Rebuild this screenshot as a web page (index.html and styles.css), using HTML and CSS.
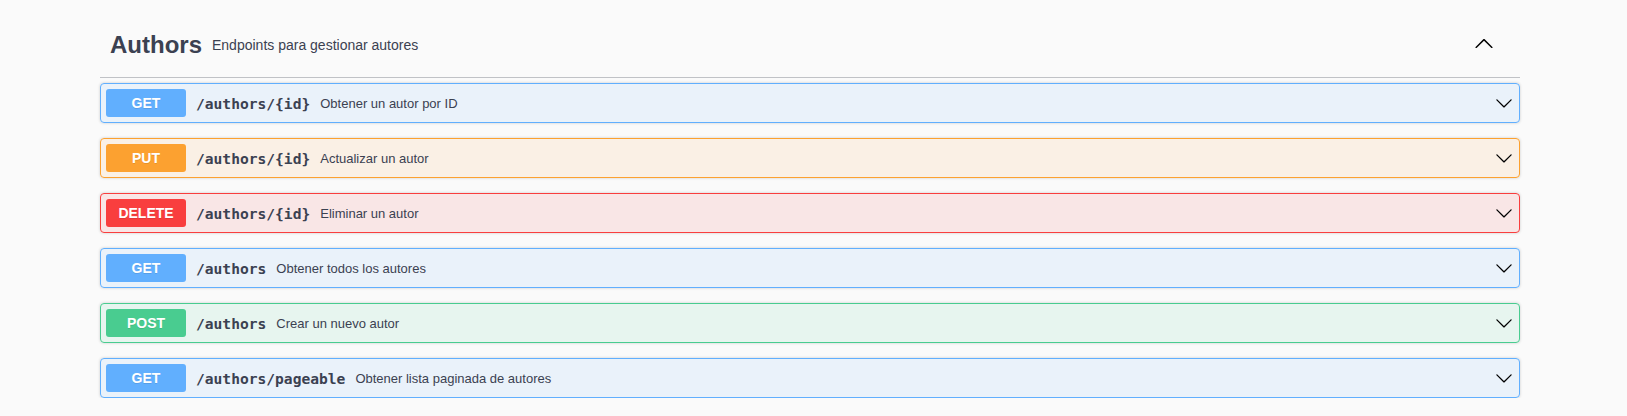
FILE: index.html
```html
<!DOCTYPE html>
<html lang="es">
<head>
<meta charset="utf-8">
<title>Authors</title>
<link rel="stylesheet" href="styles.css">
</head>
<body>
<svg class="defs" width="0" height="0" aria-hidden="true">
  <symbol viewBox="0 0 20 20" id="large-arrow-down">
    <path d="M17.418 6.109c.272-.268.709-.268.979 0s.271.701 0 .969l-7.908 7.83c-.27.268-.707.268-.979 0l-7.908-7.83c-.27-.268-.27-.701 0-.969.271-.268.709-.268.979 0L10 13.25l7.418-7.141z"/>
  </symbol>
</svg>
<div class="wrapper">
  <section class="tag-section">
    <div class="tag-header">
      <h3 class="tag-title">Authors</h3>
      <small class="tag-desc">Endpoints para gestionar autores</small>
      <button class="expand" aria-label="Collapse">
        <svg class="arrow arrow-up" width="20" height="20"><use href="#large-arrow-down"/></svg>
      </button>
    </div>
    <div class="ops">
      <div class="opblock get">
        <span class="method">GET</span>
        <span class="path">/authors/{id}</span>
        <span class="desc">Obtener un autor por ID</span>
        <svg class="arrow arrow-row" width="18" height="18"><use href="#large-arrow-down"/></svg>
      </div>
      <div class="opblock put">
        <span class="method">PUT</span>
        <span class="path">/authors/{id}</span>
        <span class="desc">Actualizar un autor</span>
        <svg class="arrow arrow-row" width="18" height="18"><use href="#large-arrow-down"/></svg>
      </div>
      <div class="opblock delete">
        <span class="method">DELETE</span>
        <span class="path">/authors/{id}</span>
        <span class="desc">Eliminar un autor</span>
        <svg class="arrow arrow-row" width="18" height="18"><use href="#large-arrow-down"/></svg>
      </div>
      <div class="opblock get">
        <span class="method">GET</span>
        <span class="path">/authors</span>
        <span class="desc">Obtener todos los autores</span>
        <svg class="arrow arrow-row" width="18" height="18"><use href="#large-arrow-down"/></svg>
      </div>
      <div class="opblock post">
        <span class="method">POST</span>
        <span class="path">/authors</span>
        <span class="desc">Crear un nuevo autor</span>
        <svg class="arrow arrow-row" width="18" height="18"><use href="#large-arrow-down"/></svg>
      </div>
      <div class="opblock get">
        <span class="method">GET</span>
        <span class="path">/authors/pageable</span>
        <span class="desc">Obtener lista paginada de autores</span>
        <svg class="arrow arrow-row" width="18" height="18"><use href="#large-arrow-down"/></svg>
      </div>
    </div>
  </section>
</div>
</body>
</html>
```
FILE: styles.css
```css
html, body {
  margin: 0;
  padding: 0;
  background: #fafafa;
}
body {
  font-family: "Liberation Sans", Arial, sans-serif;
  color: #3b4151;
}
.defs {
  position: absolute;
  width: 0;
  height: 0;
  overflow: hidden;
}
.wrapper {
  width: 1420px;
  margin-left: 100px;
  padding-top: 21px;
}
.tag-header {
  display: flex;
  align-items: center;
  padding: 10px 20px 18px 10px;
  border-bottom: 1px solid rgba(59, 65, 81, 0.3);
  margin-bottom: 5px;
}
.tag-title {
  margin: 0;
  font-size: 24px;
  line-height: 28px;
  font-weight: 700;
  color: #3b4151;
}
.tag-desc {
  flex: 1;
  font-size: 14px;
  padding: 0 10px;
  color: #3b4151;
}
.expand {
  border: none;
  background: none;
  padding: 0;
  margin-right: 6px;
  display: flex;
}
.arrow {
  fill: #000;
  display: block;
}
.arrow-up {
  transform: scaleY(-1);
  position: relative;
  top: -1px;
}
.ops {
  display: flex;
  flex-direction: column;
  gap: 15px;
}
.opblock {
  display: flex;
  align-items: center;
  padding: 5px;
  border: 1px solid;
  border-radius: 4px;
  box-shadow: 0 0 3px rgba(0, 0, 0, 0.19);
}
.method {
  min-width: 80px;
  padding: 6px 0;
  border-radius: 3px;
  font-size: 14px;
  line-height: 16px;
  font-weight: 700;
  text-align: center;
  color: #fff;
  text-shadow: 0 1px 0 rgba(0, 0, 0, 0.1);
}
.path {
  padding: 0 10px;
  font-family: "DejaVu Sans Mono", "Liberation Mono", monospace;
  font-size: 14.6px;
  font-weight: 700;
  color: #3b4151;
}
.desc {
  flex: 1;
  font-size: 13px;
  color: #3b4151;
}
.arrow-row {
  margin-right: 1px;
}
.get { background: rgba(97, 175, 254, 0.1); border-color: #61affe; }
.get .method { background: #61affe; }
.put { background: rgba(252, 161, 48, 0.1); border-color: #fca130; }
.put .method { background: #fca130; }
.delete { background: rgba(249, 62, 62, 0.1); border-color: #f93e3e; }
.delete .method { background: #f93e3e; }
.post { background: rgba(73, 204, 144, 0.1); border-color: #49cc90; }
.post .method { background: #49cc90; }
```
